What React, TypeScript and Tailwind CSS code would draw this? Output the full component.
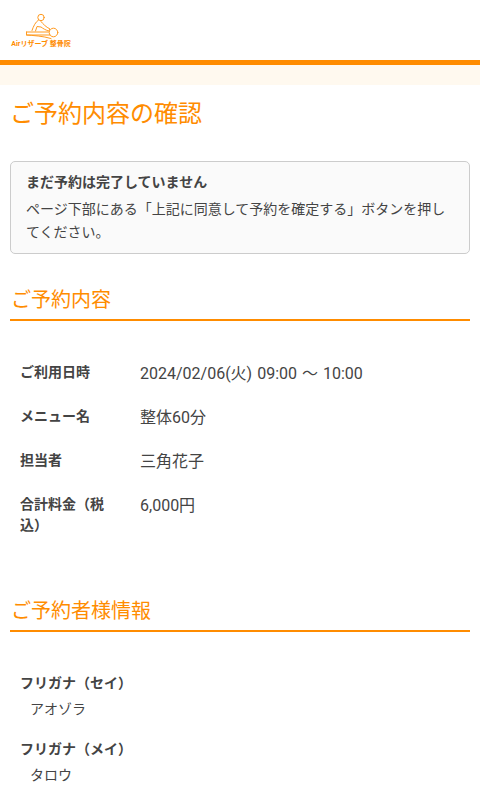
import React from 'react';

const font = { fontFamily: '"Roboto", "Noto Sans CJK JP", sans-serif' };

const Logo = () => (
  <div className="flex flex-col items-center w-[60px]">
    <svg width="36" height="28" viewBox="0 0 36 28" fill="none" stroke="#ff9a1f" strokeWidth="1" strokeLinecap="round" strokeLinejoin="round">
      <circle cx="18" cy="5.500" r="3.200" />
      <path d="M15.500 8 C12.500 10 10.500 14 9 18.500 M18 9.500 C20 12 23 15 27 17 L25.500 19 C22.500 18 20 16.500 18 15 L14 14.500 L12.500 19" />
      <circle cx="30.500" cy="20.500" r="4.300" />
      <path d="M3.500 20 H25.500 M3.500 20 V23 H27 M3.500 23 C10 23.500 20 24 28 26.500" />
    </svg>
    <span className="text-[7px] leading-[9px] font-bold text-[#ff8c00] whitespace-nowrap">Airリザーブ 整骨院</span>
  </div>
);

const Row = ({ label, value }: { label: string; value: string }) => (
  <div className="flex gap-[20px] mb-[18px]">
    <div className="w-[100px] shrink-0 text-[14px] leading-[21px] font-bold text-[#444] pt-px">{label}</div>
    <div className="flex-1 text-[16px] leading-[26px] text-[#444] [word-spacing:1px]">{value}</div>
  </div>
);

const SectionTitle = ({ children }: { children: React.ReactNode }) => (
  <h2 className="mx-[10px] border-b-2 border-[#ff8c00] pl-px pb-[4px] text-[20px] leading-[30px] text-[#ff8c00]">{children}</h2>
);

const Stacked = ({ label, value }: { label: string; value: string }) => (
  <div className="mb-[14px]">
    <div className="text-[14px] leading-[22px] font-bold text-[#444]">{label}</div>
    <div className="pl-[10px] text-[14px] leading-[30px] text-[#444]">{value}</div>
  </div>
);

export default function App() {
  return (
    <div className="h-[800px] overflow-hidden bg-white" style={font}>
      <header className="h-[65px] border-b-[5px] border-[#ff8c00] pl-[11px] pt-[12px]">
        <Logo />
      </header>
      <div className="h-[20px] bg-[#fff9ef]" />

      <h1 className="mx-[10px] mt-[11px] text-[24px] leading-[36px] text-[#ff8c00]">ご予約内容の確認</h1>

      <div className="mx-[10px] mt-[29px] rounded-[5px] border border-[#ccc] bg-[#fafafa] px-[15px] pt-[9px] pb-[9px]">
        <p className="text-[14px] leading-[22px] font-bold text-[#444]">まだ予約は完了していません</p>
        <p className="mt-[5px] text-[14px] leading-[23px] text-[#444]">ページ下部にある「上記に同意して予約を確定する」ボタンを押してください。</p>
      </div>

      <div className="mt-[31px]">
        <SectionTitle>ご予約内容</SectionTitle>
      </div>

      <div className="px-[20px] mt-[40px]">
        <Row label="ご利用日時" value="2024/02/06(火) 09:00 〜 10:00" />
        <Row label="メニュー名" value="整体60分" />
        <Row label="担当者" value="三角花子" />
        <Row label="合計料金（税込）" value="6,000円" />
      </div>

      <div className="mt-[60px]">
        <SectionTitle>ご予約者様情報</SectionTitle>
      </div>

      <div className="px-[20px] mt-[40px]">
        <Stacked label="フリガナ（セイ）" value="アオゾラ" />
        <Stacked label="フリガナ（メイ）" value="タロウ" />
      </div>
    </div>
  );
}
